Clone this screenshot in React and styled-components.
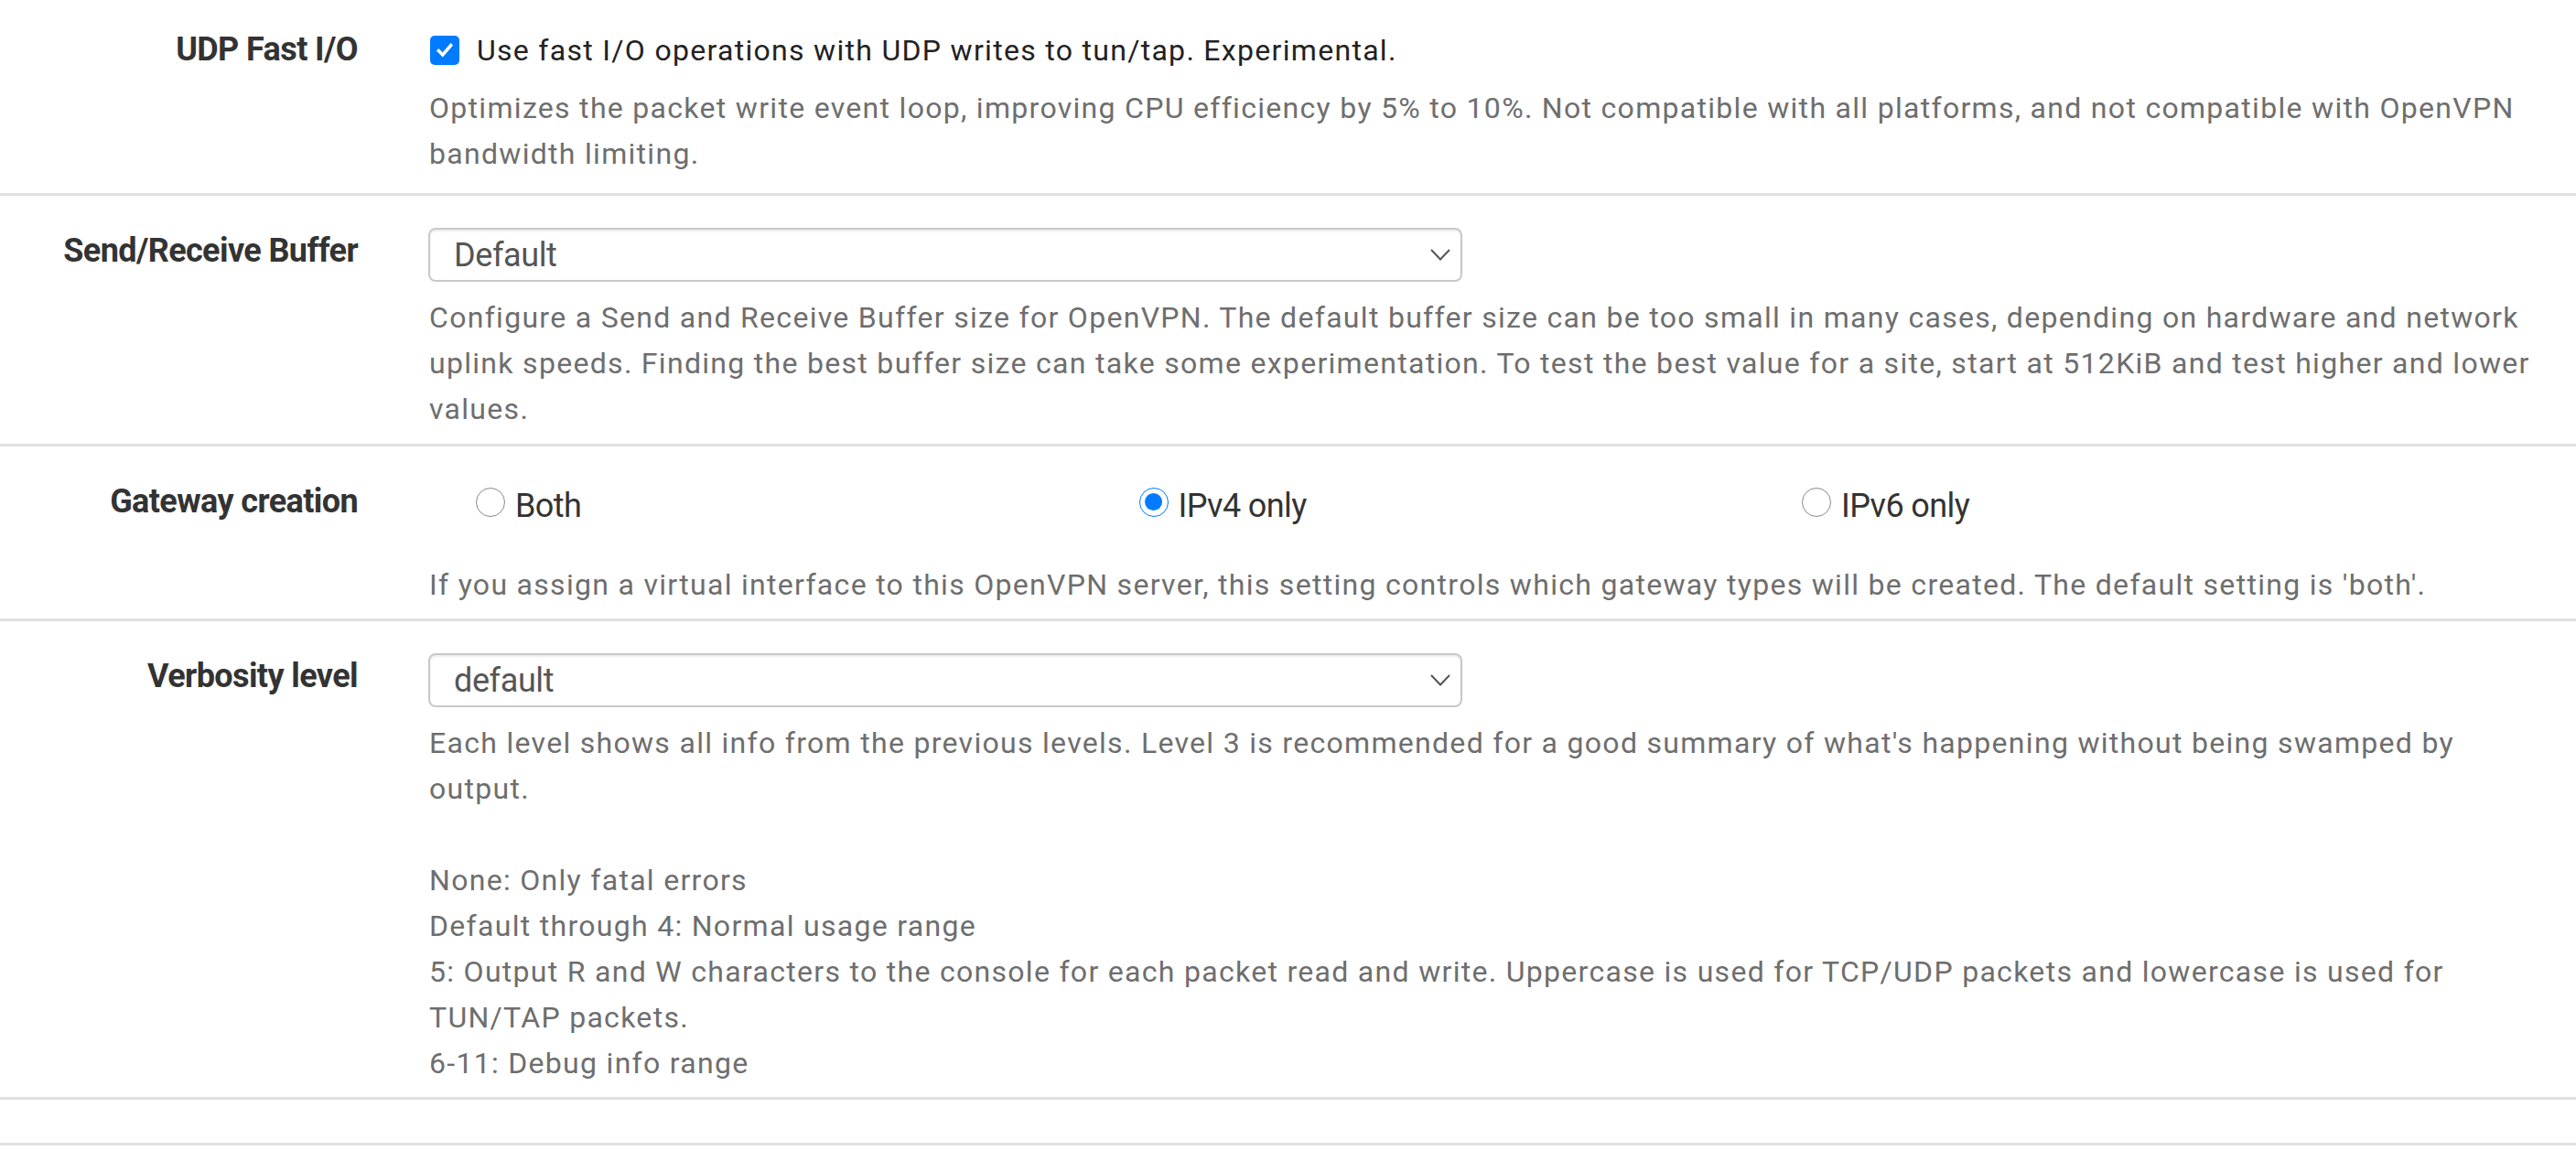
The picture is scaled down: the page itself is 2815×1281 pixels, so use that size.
import React from "react";
import styled, { createGlobalStyle } from "styled-components";

const GlobalStyle = createGlobalStyle`
  html, body {
    margin: 0;
    padding: 0;
    background: #fff;
  }
  body {
    font-family: Roboto, "Liberation Sans", Arial, sans-serif;
    color: #333;
  }
`;

const Page = styled.div`
  width: 2815px;
`;

const Row = styled.div`
  display: grid;
  grid-template-columns: 469px 1fr;
  min-height: ${(p) => p.$height || 0}px;
  border-bottom: 3px solid #e1e1e1;
`;

const Label = styled.div`
  text-align: right;
  padding: ${(p) => p.$top}px 78px 0 0;
  font-size: 36px;
  letter-spacing: -0.6px;
  line-height: 50px;
  font-weight: 700;
  color: #333;
`;

const Content = styled.div`
  padding: ${(p) => p.$top}px 31px ${(p) => p.$bottom}px 0;
`;

const Help = styled.div`
  margin-top: ${(p) => p.$gap}px;
  font-size: 32px;
  letter-spacing: 1.3px;
  line-height: 50px;
  color: #6e6e6e;
`;

const CheckLine = styled.label`
  display: flex;
  align-items: center;
  height: 50px;
  gap: 19px;
  font-size: 32px;
  letter-spacing: 1.3px;
  color: #222;
`;

const CheckBox = styled.span`
  display: flex;
  align-items: center;
  justify-content: center;
  flex: none;
  width: 32px;
  height: 32px;
  margin-left: 1px;
  border-radius: 5px;
  background: #007bff;
`;

const SelectBox = styled.div`
  display: flex;
  align-items: center;
  justify-content: space-between;
  box-sizing: border-box;
  width: 1130px;
  height: 59px;
  margin-left: -1px;
  padding: 0 11px 0 26px;
  border: 2px solid #c8c8c8;
  border-radius: 8px;
  box-shadow: inset 0 2px 2px rgba(0, 0, 0, 0.075);
  font-size: 36px;
  letter-spacing: -0.4px;
  color: #555;
`;

const RadioGroup = styled.div`
  display: grid;
  grid-template-columns: repeat(3, 724.5px);
  padding-left: 51px;
`;

const RadioOption = styled.label`
  display: flex;
  align-items: center;
  height: 50px;
  gap: 11px;
  font-size: 36px;
  letter-spacing: -0.6px;
  color: #333;
`;

const RadioDot = styled.span`
  box-sizing: border-box;
  display: flex;
  align-items: center;
  justify-content: center;
  flex: none;
  width: 32px;
  height: 32px;
  margin-bottom: 9px;
  border-radius: 50%;
  border: 1.5px solid ${(p) => (p.$checked ? "#007bff" : "#8a8a8a")};
  background: #fff;

  &::after {
    content: "";
    display: ${(p) => (p.$checked ? "block" : "none")};
    width: 19px;
    height: 19px;
    border-radius: 50%;
    background: #007bff;
  }
`;

const Check = () => (
  <svg width="24" height="24" viewBox="0 0 32 32">
    <polyline
      points="5.5,15 13,22.5 26.5,7"
      fill="none"
      stroke="#fff"
      strokeWidth="4.6"
      strokeLinejoin="miter"
    />
  </svg>
);

const Chevron = () => (
  <svg width="22" height="13" viewBox="0 0 22 13">
    <polyline points="1,1 11,11.5 21,1" fill="none" stroke="#555" strokeWidth="2" />
  </svg>
);

const Select = ({ value }) => (
  <SelectBox>
    <span>{value}</span>
    <Chevron />
  </SelectBox>
);

const Radio = ({ label, checked }) => (
  <RadioOption>
    <RadioDot $checked={checked} />
    {label}
  </RadioOption>
);

const App = () => {
  return (
    <Page>
      <GlobalStyle />
      <Row>
        <Label $top={29}>UDP Fast I/O</Label>
        <Content $top={30} $bottom={18}>
          <CheckLine>
            <CheckBox>
              <Check />
            </CheckBox>
            Use fast I/O operations with UDP writes to tun/tap. Experimental.
          </CheckLine>
          <Help $gap={13}>
            Optimizes the packet write event loop, improving CPU efficiency by 5% to 10%. Not
            compatible with all platforms, and not compatible with OpenVPN bandwidth limiting.
          </Help>
        </Content>
      </Row>

      <Row>
        <Label $top={35}>Send/Receive Buffer</Label>
        <Content $top={35} $bottom={13}>
          <Select value="Default" />
          <Help $gap={14}>
            Configure a Send and Receive Buffer size for OpenVPN. The default buffer size can be
            too small in many cases, depending on hardware and network uplink speeds. Finding the
            best buffer size can take some experimentation. To test the best value for a site,
            start at 512KiB and test higher and lower values.
          </Help>
        </Content>
      </Row>

      <Row>
        <Label $top={35}>Gateway creation</Label>
        <Content $top={40} $bottom={12}>
          <RadioGroup>
            <Radio label="Both" />
            <Radio label="IPv4 only" checked />
            <Radio label="IPv6 only" />
          </RadioGroup>
          <Help $gap={36}>
            If you assign a virtual interface to this OpenVPN server, this setting controls which
            gateway types will be created. The default setting is 'both'.
          </Help>
        </Content>
      </Row>

      <Row>
        <Label $top={35}>Verbosity level</Label>
        <Content $top={35} $bottom={12}>
          <Select value="default" />
          <Help $gap={14}>
            Each level shows all info from the previous levels. Level 3 is recommended for a good
            summary of what's happening without being swamped by output.
            <br />
            <br />
            None: Only fatal errors
            <br />
            Default through 4: Normal usage range
            <br />
            5: Output R and W characters to the console for each packet read and write. Uppercase
            is used for TCP/UDP packets and lowercase is used for TUN/TAP packets.
            <br />
            6-11: Debug info range
          </Help>
        </Content>
      </Row>

      <Row $height={47} />
    </Page>
  );
};

export default App;
